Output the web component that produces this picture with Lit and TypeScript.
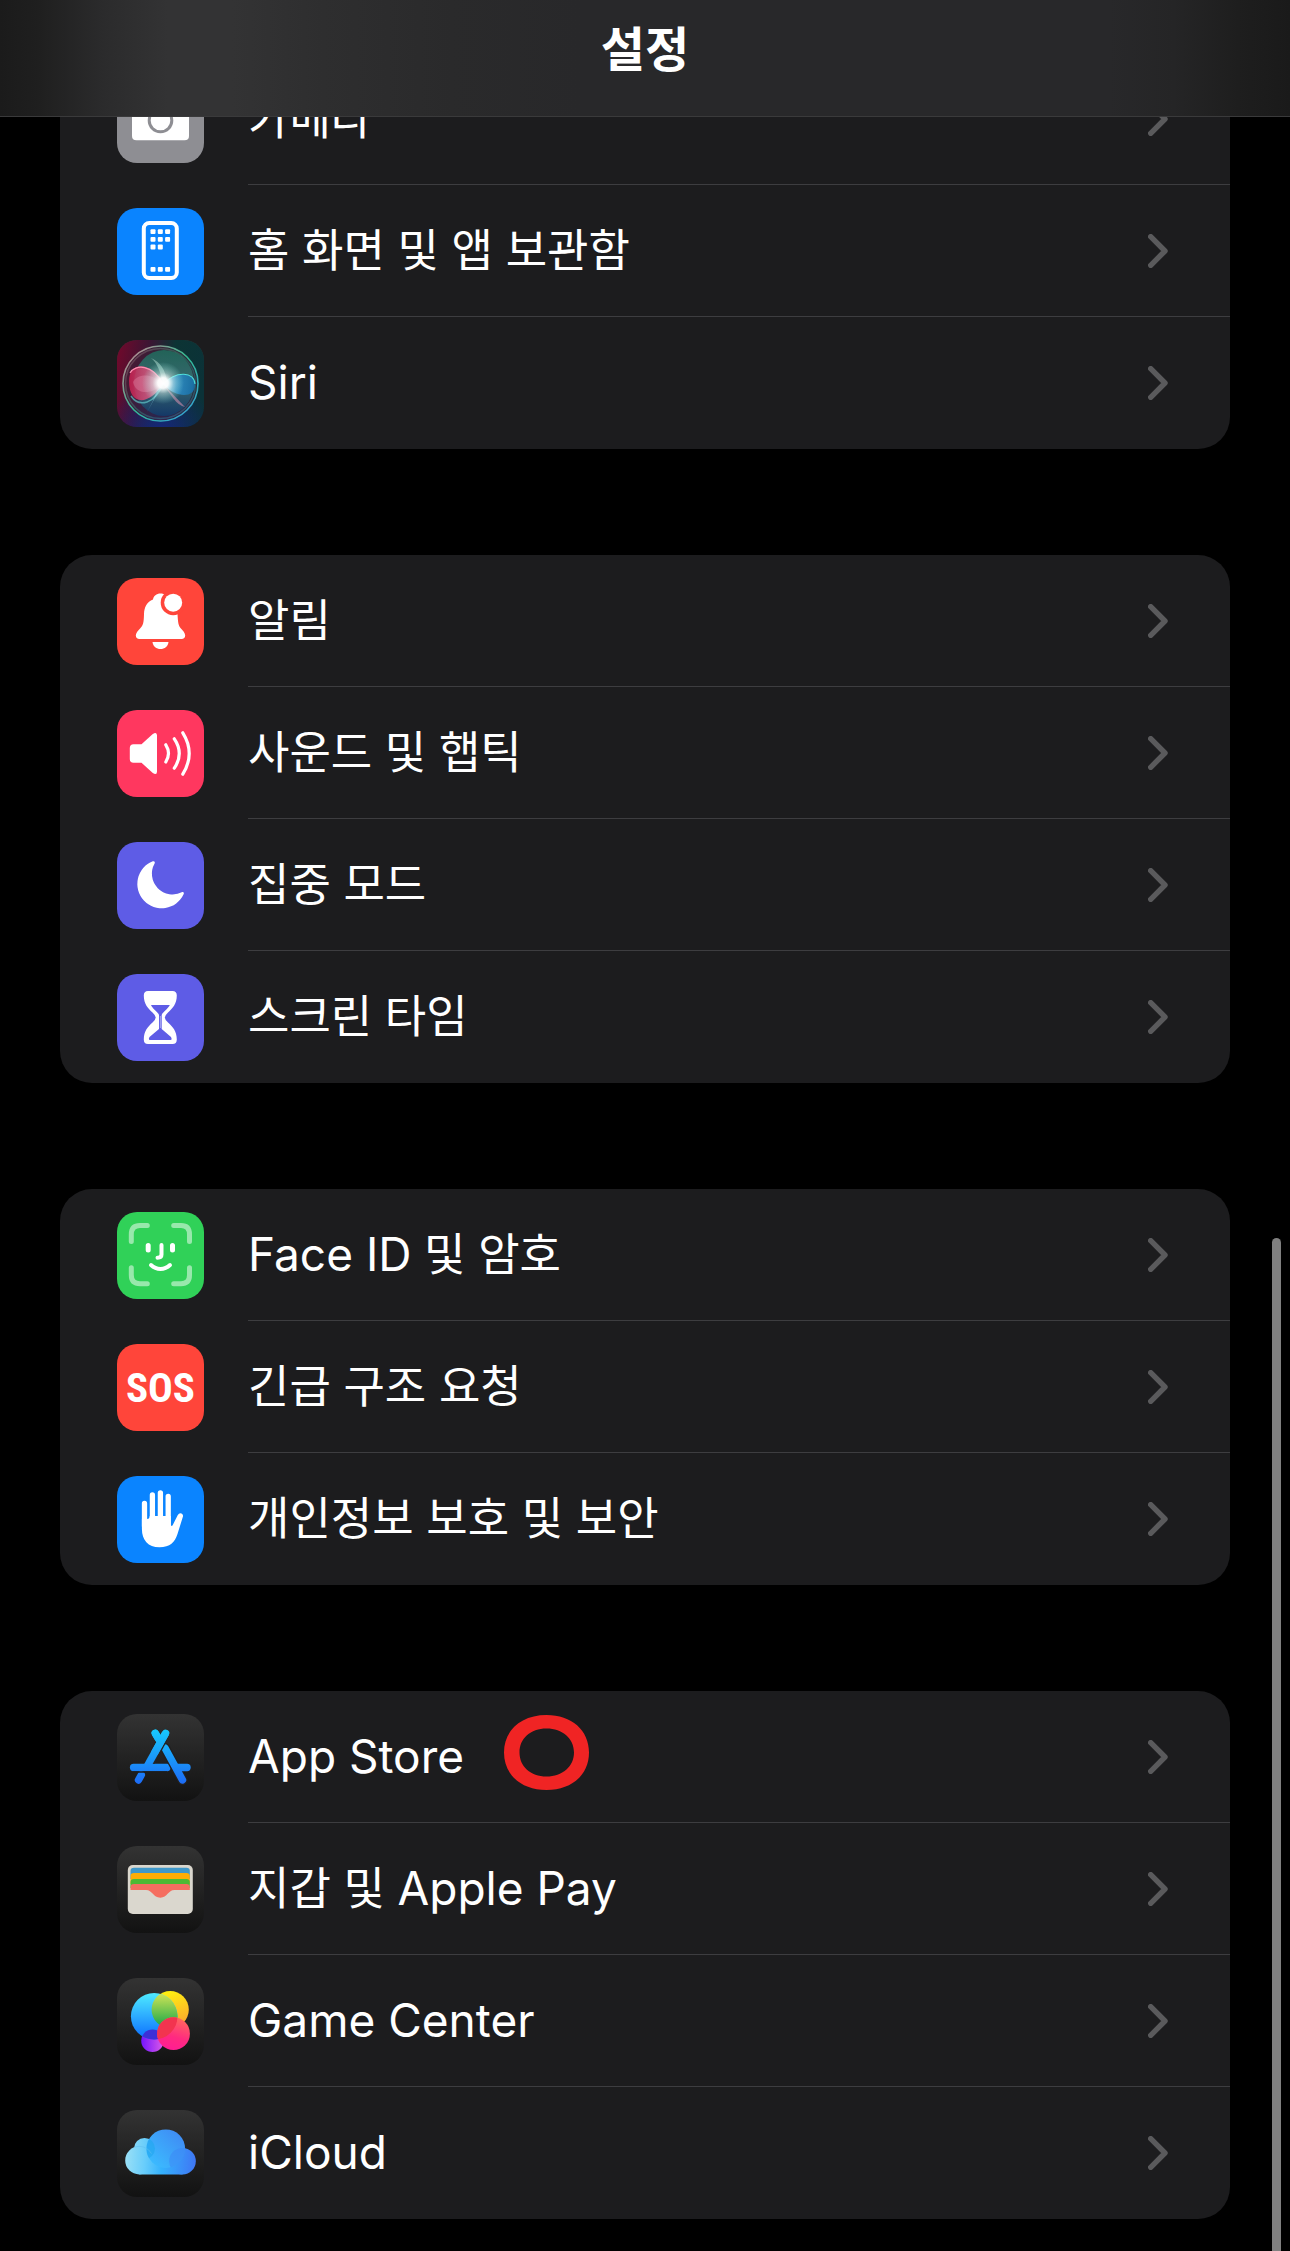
import { LitElement, html, svg, css, nothing, type TemplateResult, type SVGTemplateResult } from "lit";
import { customElement, property } from "lit/decorators.js";

interface Setting {
  label: string;
  icon: string;
  marked?: boolean;
}

const GROUPS: Setting[][] = [
  [
    { label: "카메라", icon: "camera" },
    { label: "홈 화면 및 앱 보관함", icon: "home" },
    { label: "Siri", icon: "siri" },
  ],
  [
    { label: "알림", icon: "bell" },
    { label: "사운드 및 햅틱", icon: "sound" },
    { label: "집중 모드", icon: "focus" },
    { label: "스크린 타임", icon: "time" },
  ],
  [
    { label: "Face ID 및 암호", icon: "face" },
    { label: "긴급 구조 요청", icon: "sos" },
    { label: "개인정보 보호 및 보안", icon: "privacy" },
  ],
  [
    { label: "App Store", icon: "store", marked: true },
    { label: "지갑 및 Apple Pay", icon: "wallet" },
    { label: "Game Center", icon: "game" },
    { label: "iCloud", icon: "cloud" },
  ],
];

const dots = (y: number, xs: number[]) =>
  xs.map((x) => svg`<rect x=${x} y=${y} width="5" height="4.8" rx="1"/>`);

const ICONS: Record<string, SVGTemplateResult> = {
  camera: svg`
    <path fill="#fff" d="M20 24H28L32 18H55L59 24H67Q72 24 72 29V60Q72 64.3 67.500 64.300H19.500Q15 64.300 15 60V29Q15 24 20 24Z"/>
    <circle cx="43.500" cy="44.500" r="11.300" fill="none" stroke="#8e8e93" stroke-width="3"/>`,
  home: svg`
    <rect x="26.800" y="15" width="33" height="55" rx="5.500" fill="none" stroke="#fff" stroke-width="4"/>
    <g fill="#fff">
      ${dots(21.3, [33.5, 40.8, 48.1])}
      ${dots(28.9, [33.5, 40.8, 48.1])}
      ${dots(36.6, [33.5, 40.8])}
      ${dots(59, [33.5, 40.8, 48.1])}
    </g>`,
  siri: svg`
    <defs>
      <linearGradient id="siri-bg" x1="0" y1="0.300" x2="1" y2="0.500">
        <stop offset="0" stop-color="#6b0a2c"/><stop offset="0.300" stop-color="#3d1433"/>
        <stop offset="0.600" stop-color="#0c3434"/><stop offset="1" stop-color="#0b3238"/>
      </linearGradient>
      <radialGradient id="siri-low" cx="0.500" cy="1.050" r="0.600">
        <stop offset="0" stop-color="#16257c"/><stop offset="1" stop-color="#16257c" stop-opacity="0"/>
      </radialGradient>
      <linearGradient id="siri-ring" x1="0" y1="0" x2="1" y2="1">
        <stop offset="0" stop-color="#e08a9b"/><stop offset="0.500" stop-color="#35c99a"/><stop offset="1" stop-color="#3aa6ee"/>
      </linearGradient>
      <linearGradient id="siri-ball" x1="0" y1="0" x2="0" y2="1">
        <stop offset="0" stop-color="#1f6e5e"/><stop offset="0.500" stop-color="#3a7377"/><stop offset="1" stop-color="#103c6c"/>
      </linearGradient>
      <linearGradient id="siri-red" x1="0" y1="0" x2="1" y2="0">
        <stop offset="0" stop-color="#c81f50"/><stop offset="0.600" stop-color="#d8577f"/><stop offset="1" stop-color="#f7b8cc"/>
      </linearGradient>
      <linearGradient id="siri-blue" x1="0" y1="0" x2="1" y2="0">
        <stop offset="0" stop-color="#b6f0ff"/><stop offset="0.400" stop-color="#2f93cf"/><stop offset="1" stop-color="#126fae"/>
      </linearGradient>
      <radialGradient id="siri-glow">
        <stop offset="0" stop-color="#fff"/><stop offset="0.250" stop-color="#fff" stop-opacity="0.950"/>
        <stop offset="0.500" stop-color="#dff8f4" stop-opacity="0.450"/><stop offset="1" stop-color="#9fe" stop-opacity="0"/>
      </radialGradient>
    </defs>
    <rect width="87" height="87" fill="url(#siri-bg)"/>
    <rect width="87" height="87" fill="url(#siri-low)"/>
    <circle cx="43.500" cy="43.500" r="37" fill="#3d2338" opacity="0.600"/>
    <ellipse cx="47" cy="43" rx="30" ry="33" fill="url(#siri-ball)" opacity="0.850"/>
    <path d="M46 44C36 22 12 20 12 41C12 66 32 66 46 44Z" fill="url(#siri-red)" opacity="0.850"/>
    <path d="M46 44C34 32 20 34 16 42C18 54 34 56 46 44Z" fill="#f2a0bc" opacity="0.300"/>
    <path d="M46 44C36 24 18 24 13 33" fill="none" stroke="#ff8fb2" stroke-width="1.200"/>
    <path d="M46 44C38 64 22 68 14 56" fill="none" stroke="#5fc5c8" stroke-width="1.500" opacity="0.700"/>
    <path d="M46 44C60 30 78 32 78 45C78 59 58 58 46 44Z" fill="url(#siri-blue)" opacity="0.800"/>
    <path d="M46 44C60 30 77 32 78 44" fill="none" stroke="#4fe0dc" stroke-width="1.200"/>
    <path d="M46 44L68 67Q62 66 56 58Z" fill="#f09ab8" opacity="0.500"/>
    <path d="M46 44L30 72Q36 62 40 50Z" fill="#8fd8f0" opacity="0.450"/>
    <path d="M46 44Q42 24 34 18Q48 24 50 42Z" fill="#d8fff0" opacity="0.400"/>
    <circle cx="46" cy="43" r="21" fill="url(#siri-glow)"/>
    <circle cx="43.500" cy="43.500" r="37.500" fill="none" stroke="url(#siri-ring)" stroke-width="1.600" opacity="0.900"/>
    <circle cx="43.500" cy="43.500" r="35" fill="none" stroke="url(#siri-ring)" stroke-width="1.500" opacity="0.300"/>`,
  bell: svg`
    <path fill="#fff" d="M43.500 15.500C39.500 15.500 36.500 18 36 21.500C30 24 27.200 29 27 36C26.800 45 26 47.500 23.500 50C21 52.500 18.800 55 18.800 57.500C18.800 59.800 20.200 61 22.500 61H64.500C66.800 61 68.200 59.800 68.200 57.500C68.200 55 66 52.500 63.500 50C61.500 47.500 61 45 60.500 36C60 29 57 24 51 21.500C50.500 18 47.500 15.500 43.500 15.500Z"/>
    <path fill="#fff" d="M35.500 64H51.500C51 68.500 47.500 71 43.500 71S36 68.500 35.500 64Z"/>
    <circle cx="56.200" cy="24.700" r="12.500" fill="#ff453a"/>
    <circle cx="56.200" cy="24.700" r="9" fill="#fff"/>`,
  sound: svg`
    <path fill="#fff" d="M16.500 34.200H24.500L35.500 24.200Q40 21.200 40 25.500V61.500Q40 65.800 35.500 62.800L24.500 52.800H16.500Q12.800 52.800 12.800 49V38Q12.800 34.200 16.500 34.200Z"/>
    <g fill="none" stroke="#fff" stroke-width="3.200" stroke-linecap="round">
      <path d="M48.800 34.800Q54.200 43.300 48.800 52"/>
      <path d="M57.300 28.800Q67.200 43.300 57.300 58.200"/>
      <path d="M65.800 22.800Q78.600 43.300 65.800 64.200"/>
    </g>`,
  focus: svg`
    <path fill="#fff" d="M35.800 19.300C37.500 18.700 38.300 19.800 37.600 21.500A20.700 20.700 0 0 0 65.300 50C66.700 49.700 67.300 50.800 66.600 52.300A24.300 24.300 0 1 1 35.800 19.300Z"/>`,
  time: svg`
    <path fill="#fff" d="M31 17H55.500Q59.800 17 59.800 21.500C59.800 30 55.500 34.500 51 38.500Q47.800 41.500 47.800 43.500T51 48.500C55.500 52.500 59.800 57 59.800 65.500Q59.800 70 55.500 70H31Q26.800 70 26.800 65.500C26.800 57 31 52.500 35.500 48.500Q38.700 45.500 38.700 43.500T35.500 38.500C31 34.500 26.800 30 26.800 21.500Q26.800 17 31 17Z"/>
    <path fill="#5e5ce6" d="M34 31H52.800C51.500 34.500 45.500 38 44.700 41V55L54 63Q55.500 66 53.500 66H33Q31 66 32.500 63L42 55V41C41.200 38 35 34.500 34 31Z"/>
    <path stroke="#bebdf5" stroke-width="0.800" d="M43.350 42V54"/>`,
  face: svg`
    <g fill="none" stroke="#fff" stroke-width="5" stroke-linecap="round">
      <g opacity="0.500">
        <path d="M14.300 29.500V22.500Q14.300 13.600 23 13.600H30.300"/>
        <path d="M56.700 13.600H64Q72.500 13.600 72.500 22.500V29.500"/>
        <path d="M72.500 55.800V63Q72.500 71.700 64 71.700H56.700"/>
        <path d="M30.300 71.700H23Q14.300 71.700 14.300 63V55.800"/>
      </g>
      <path d="M31.200 33.500V38M55.500 33.500V38"/>
      <path stroke-width="4" d="M44.500 33V42.500Q44.500 45.700 40.500 45.700M34 53C39.500 58.200 47.500 58.200 53 53"/>
    </g>`,
  sos: svg`<text class="sos" x="43.500" y="58" text-anchor="middle" fill="#fff">SOS</text>`,
  privacy: svg`
    <g stroke="#fff" stroke-width="5.300" stroke-linecap="round">
      <path d="M27.500 27.500V50M35.400 19V50M43.400 16.800V50M51.200 20.500V50"/>
    </g>
    <path fill="#fff" d="M24.900 43H30.100Q32.700 43 32.700 40H53.800V48.500Q54 50.600 55.500 49.500L60.800 39Q62.300 36.500 64.500 37.500T65.800 41L60.500 58C58 66 53 71.300 42.500 71.300C31 71.300 24.900 64 24.900 53Z"/>`,
  store: svg`
    <defs>
      <linearGradient id="store-ink" gradientUnits="userSpaceOnUse" x1="0" y1="15" x2="0" y2="70">
        <stop offset="0" stop-color="#17cafd"/><stop offset="1" stop-color="#1d6bf6"/>
      </linearGradient>
    </defs>
    <g fill="none" stroke-width="7.400" stroke-linecap="round" stroke="url(#store-ink)">
      <path d="M38.300 19.300L44 29"/>
      <path d="M16.600 53.500H50"/>
      <path stroke="#202020" stroke-width="10" d="M48 34L65.500 66"/>
      <path d="M48 34L65.500 66"/>
      <path d="M60 53.500H70"/>
      <path stroke="#242424" stroke-width="10" stroke-linecap="butt" d="M46 24L33 47.500"/>
      <path stroke-linecap="butt" d="M48.600 19.300L29.700 53"/>
      <path d="M48.600 19.300L38 38"/>
      <path d="M38.300 19.300L42 25.500"/>
      <path d="M21.500 66L24.300 61"/>
      <path stroke="#1c1c1c" stroke-width="1.600" stroke-linecap="butt" d="M16 58H50"/>
    </g>`,
  wallet: svg`
    <rect x="10.800" y="19" width="65" height="49" rx="5" fill="#dad7ce"/>
    <path fill="#3f98ca" d="M13.500 25Q13.500 21.700 17 21.700H69.500Q72.800 21.700 72.800 25V33H13.500Z"/>
    <path fill="#fdad06" d="M13.500 30Q13.500 27 17 27H69.500Q72.800 27 72.800 30V38H13.500Z"/>
    <path fill="#4db934" d="M13.500 36Q13.500 33 17 33H69.500Q72.800 33 72.800 36V42H13.500Z"/>
    <path fill="#f56e60" d="M13.500 41Q13.500 38 17 38H69.500Q72.800 38 72.800 41V44H57.500C51 44 50.500 51.700 43.300 51.700S35.500 44 29 44H13.500Z"/>`,
  game: svg`
    <defs>
      <linearGradient id="game-blue" x1="0" y1="0" x2="0" y2="1"><stop offset="0" stop-color="#4febff"/><stop offset="1" stop-color="#0a6cff"/></linearGradient>
      <linearGradient id="game-yellow" x1="0.300" y1="0" x2="0.700" y2="1"><stop offset="0" stop-color="#fff50f"/><stop offset="1" stop-color="#fba42f"/></linearGradient>
      <linearGradient id="game-green" gradientUnits="userSpaceOnUse" x1="0" y1="16" x2="0" y2="50"><stop offset="0" stop-color="#cfe356"/><stop offset="1" stop-color="#12a548"/></linearGradient>
      <linearGradient id="game-pink" x1="0.700" y1="0" x2="0.400" y2="1"><stop offset="0" stop-color="#ff6a5c"/><stop offset="0.600" stop-color="#ff2a80"/><stop offset="1" stop-color="#ff1c94"/></linearGradient>
      <linearGradient id="game-purple" x1="0" y1="0" x2="1" y2="0"><stop offset="0" stop-color="#7414ff"/><stop offset="1" stop-color="#dd5be6"/></linearGradient>
      <clipPath id="game-clip"><circle cx="37.200" cy="38.300" r="23.300"/></clipPath>
    </defs>
    <circle cx="35.500" cy="62.700" r="11.300" fill="url(#game-purple)"/>
    <circle cx="53.200" cy="31.700" r="18.600" fill="url(#game-yellow)"/>
    <circle cx="37.200" cy="38.300" r="23.300" fill="url(#game-blue)"/>
    <g clip-path="url(#game-clip)">
      <circle cx="35.500" cy="62.700" r="11.300" fill="#3d2fd6"/>
      <circle cx="53.200" cy="31.700" r="18.600" fill="url(#game-green)"/>
    </g>
    <circle cx="56.500" cy="55.700" r="16.400" fill="url(#game-pink)"/>
    <g clip-path="url(#game-clip)"><circle cx="56.500" cy="55.700" r="16.400" fill="#f2344f"/></g>`,
  cloud: svg`
    <defs>
      <linearGradient id="cloud-ink" gradientUnits="userSpaceOnUse" x1="8" y1="48" x2="79" y2="52">
        <stop offset="0" stop-color="#9be0f6"/><stop offset="0.280" stop-color="#68cdfb"/>
        <stop offset="0.520" stop-color="#35b2fd"/><stop offset="1" stop-color="#3f76f4"/>
      </linearGradient>
      <linearGradient id="cloud-top" gradientUnits="userSpaceOnUse" x1="36" y1="56" x2="64" y2="28">
        <stop offset="0" stop-color="#3bbcff"/><stop offset="1" stop-color="#3f8ff5"/>
      </linearGradient>
      <clipPath id="cloud-clip"><circle cx="48.800" cy="38.700" r="19.300"/></clipPath>
    </defs>
    <g fill="url(#cloud-ink)">
      <circle cx="27.500" cy="38.500" r="10.500"/>
      <circle cx="65.500" cy="51.200" r="13.300"/>
      <circle cx="22.300" cy="50.400" r="14.100"/>
      <rect x="22.300" y="44" width="43.200" height="20.500"/>
    </g>
    <circle cx="48.800" cy="38.700" r="19.300" fill="url(#cloud-top)"/>
    <g clip-path="url(#cloud-clip)">
      <circle cx="27.500" cy="38.500" r="10.500" fill="#1fa6ee" opacity="0.600"/>
      <circle cx="65.500" cy="51.200" r="13.300" fill="#3b86f6" opacity="0.500"/>
    </g>
    <path d="M17 37.300A14.100 14.100 0 0 1 34.500 43.500" fill="none" stroke="#5dbff0" stroke-width="0.800" opacity="0.700"/>`,
};

/** Wraps each Latin run so that its capitals match the height of the Hangul around it. */
const mixedText = (text: string) =>
  text
    .split(/([A-Za-z]+(?: [A-Za-z]+)*)/)
    .filter((part) => part !== "")
    .map((part) => (/[A-Za-z]/.test(part) ? html`<span class="latin">${part}</span>` : part));

@customElement("setting-row")
export class SettingRow extends LitElement {
  @property({ attribute: false }) item!: Setting;

  static styles = css`
    :host {
      display: block;
    }
    .row {
      display: flex;
      min-height: 132px;
      color: #fff;
      text-decoration: none;
    }
    .tile {
      flex: none;
      width: 87px;
      height: 87px;
      margin: 23px 44px 22px 57px;
      border-radius: 20px;
      overflow: hidden;
      background: linear-gradient(#333, #121212);
    }
    .tile svg {
      display: block;
      width: 100%;
      height: 100%;
    }
    .camera { background: #8e8e93; }
    .home,
    .privacy { background: #0a84ff; }
    .bell,
    .sos-tile { background: #ff453a; }
    .sound { background: #ff375f; }
    .focus,
    .time { background: #5e5ce6; }
    .face { background: #30d158; }
    .sos {
      font: 700 41px "Liberation Sans Narrow", "Roboto Condensed", "Open Sans Condensed", Roboto, sans-serif;
    }
    .body {
      position: relative;
      flex: 1;
      display: flex;
      align-items: center;
      justify-content: space-between;
      padding-right: 62px;
      border-bottom: 1px solid #3d3d40;
    }
    :host([last]) .body {
      border-bottom-color: transparent;
    }
    .label {
      font-size: 45px;
      line-height: 60px;
    }
    .latin {
      font-size: 46px;
    }
    .chevron {
      flex: none;
      width: 20px;
      height: 34px;
    }
    .mark {
      position: absolute;
      left: 256px;
      top: 24px;
      width: 85px;
      height: 75px;
    }
  `;

  render(): TemplateResult {
    const { label, icon, marked } = this.item;
    return html`
      <a class="row" href="#${icon}">
        <span class="tile ${icon === "sos" ? "sos-tile" : icon}">
          <svg viewBox="0 0 87 87" aria-hidden="true">${ICONS[icon]}</svg>
        </span>
        <span class="body">
          <span class="label">${mixedText(label)}</span>
          <svg class="chevron" viewBox="0 0 20 34" aria-hidden="true">
            <path d="M2.700 2.700L17 17L2.700 31.300" fill="none" stroke="#5a5a5c" stroke-width="5.400" stroke-linecap="round" stroke-linejoin="round"/>
          </svg>
          ${marked
            ? html`<svg class="mark" viewBox="0 0 85 75" aria-hidden="true">
                <path fill="#f02424" fill-rule="evenodd" d="M42.500 0C67.500 0 85 15 85 37.500S67.500 75 42.500 75S0 60 0 37.500S17.500 0 42.500 0ZM42.500 13.500C26.500 13.500 15.500 23.500 15.500 37.500S26.500 61.500 42.500 61.500S70 51.500 70 37.500S58.500 13.500 42.500 13.500Z"/>
              </svg>`
            : nothing}
        </span>
      </a>
    `;
  }
}

@customElement("app-root")
export class AppRoot extends LitElement {
  static styles = css`
    :host {
      display: block;
      position: relative;
      min-height: 100vh;
      background: #000;
      color: #fff;
      font-family: Inter, "Noto Sans CJK KR", sans-serif;
    }
    .bar {
      position: sticky;
      top: 0;
      z-index: 1;
      display: flex;
      align-items: center;
      justify-content: center;
      box-sizing: border-box;
      height: 117px;
      padding-bottom: 16px;
      border-bottom: 1px solid #3a3a3b;
      background: linear-gradient(
        90deg,
        #1b1b1b 0%,
        #1f1f1f 3%,
        #2b2b2c 8%,
        #333334 13%,
        #333334 18%,
        #2e2e2f 25%,
        #2a2a2b 35%,
        #28282a 45%,
        #28282a 86%,
        #252526 91%,
        #1e1e1e 96%,
        #1a1a1a 100%
      );
    }
    .title {
      margin: 0;
      font-size: 48px;
      font-weight: 700;
      line-height: 60px;
    }
    .groups {
      display: flex;
      flex-direction: column;
      gap: 106px;
      margin-top: -64px;
      padding: 0 60px 32px;
    }
    .group {
      margin: 0;
      padding: 0;
      list-style: none;
      border-radius: 32px;
      background: #1c1c1e;
    }
    .thumb {
      position: absolute;
      top: 55%;
      right: 9px;
      bottom: 0;
      width: 9px;
      border-radius: 5px 5px 0 0;
      background: #808080;
    }
  `;

  render(): TemplateResult {
    return html`
      <header class="bar"><h1 class="title">설정</h1></header>
      <main class="groups">
        ${GROUPS.map(
          (group) => html`
            <ul class="group">
              ${group.map(
                (item, i) => html`<li><setting-row .item=${item} ?last=${i === group.length - 1}></setting-row></li>`,
              )}
            </ul>
          `,
        )}
      </main>
      <div class="thumb" aria-hidden="true"></div>
    `;
  }
}
